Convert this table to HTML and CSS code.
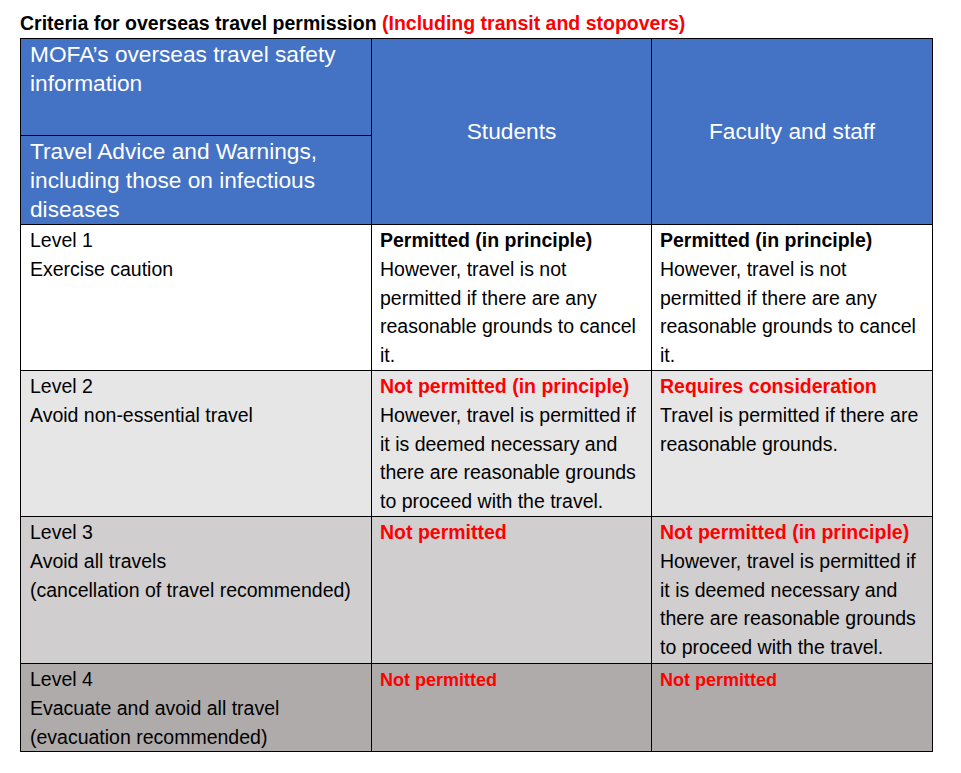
FILE: index.html
```html
<!DOCTYPE html>
<html>
<head>
<meta charset="utf-8">
<link rel="stylesheet" href="styles.css">
</head>
<body>
<div class="page">
  <div class="title">Criteria for overseas travel permission <span class="red">(Including transit and stopovers)</span></div>
  <table class="grid">
    <colgroup><col class="c1"><col class="c2"><col class="c3"></colgroup>
    <tr class="h1">
      <th class="hl">MOFA’s overseas travel safety information</th>
      <th class="hc" rowspan="2">Students</th>
      <th class="hc" rowspan="2">Faculty and staff</th>
    </tr>
    <tr class="h2">
      <th class="hl">Travel Advice and Warnings, including those on infectious diseases</th>
    </tr>
    <tr class="l1">
      <td>Level 1<br>Exercise caution</td>
      <td><b>Permitted (in principle)</b><br>However, travel is not permitted if there are any reasonable grounds to cancel it.</td>
      <td><b>Permitted (in principle)</b><br>However, travel is not permitted if there are any reasonable grounds to cancel it.</td>
    </tr>
    <tr class="l2">
      <td>Level 2<br>Avoid non-essential travel</td>
      <td><b class="red">Not permitted (in principle)</b><br>However, travel is permitted if it is deemed necessary and there are reasonable grounds to proceed with the travel.</td>
      <td><b class="red">Requires consideration</b><br>Travel is permitted if there are reasonable grounds.</td>
    </tr>
    <tr class="l3">
      <td>Level 3<br>Avoid all travels<br>(cancellation of travel recommended)</td>
      <td><b class="red">Not permitted</b></td>
      <td><b class="red">Not permitted (in principle)</b><br>However, travel is permitted if it is deemed necessary and there are reasonable grounds to proceed with the travel.</td>
    </tr>
    <tr class="l4">
      <td>Level 4<br>Evacuate and avoid all travel<br>(evacuation recommended)</td>
      <td><b class="red small">Not permitted</b></td>
      <td><b class="red small">Not permitted</b></td>
    </tr>
  </table>
</div>
</body>
</html>
```
FILE: styles.css
```css
html, body {
  margin: 0;
  padding: 0;
  background: #ffffff;
}
.page {
  padding: 12px 0 0 20px;
  font-family: "Liberation Sans", Arial, sans-serif;
  color: #000;
}
.title {
  font-size: 19.5px;
  font-weight: bold;
  line-height: 22px;
  height: 26px;
}
.red { color: #ff0000; }
.grid {
  border-collapse: collapse;
  table-layout: fixed;
  width: 913px;
}
.c1 { width: 351px; }
.c2 { width: 280px; }
.c3 { width: 281px; }
.grid th, .grid td {
  border: 1px solid #000;
  vertical-align: top;
  text-align: left;
  padding: 1px 8px 0 8px;
  font-size: 19.5px;
  line-height: 28.8px;
  font-weight: normal;
}
.grid th {
  background: #4472c4;
  color: #fff;
  font-size: 22.7px;
  line-height: 29px;
}
.grid th.hl { padding-left: 9px; }
.grid td:first-child { padding-left: 9px; }
.grid th.hc {
  text-align: center;
  vertical-align: middle;
  padding-bottom: 2px;
}
.h1 th.hl { height: 95px; }
.h2 th.hl { height: 86px; }
.l1 td { background: #ffffff; height: 144px; }
.l2 td { background: #e7e6e6; height: 144px; }
.l3 td { background: #d0cece; height: 145px; }
.l4 td { background: #afabab; height: 84px; }
.small { font-size: 18px; }
b { font-weight: bold; }
```
